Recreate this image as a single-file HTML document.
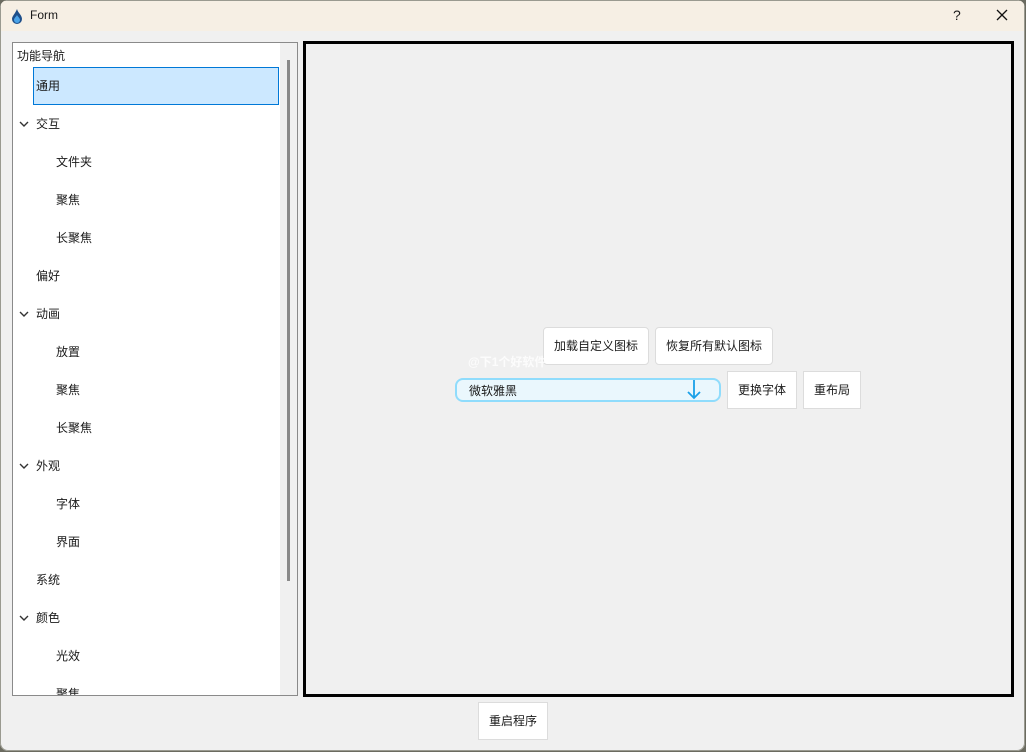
<!DOCTYPE html>
<html><head><meta charset="utf-8">
<style>
*{margin:0;padding:0;box-sizing:border-box}
html,body{width:1026px;height:752px;overflow:hidden;background:#6b6b60}
body{font-family:"Liberation Sans","Noto Sans CJK SC",sans-serif;font-size:12px;color:#1a1a1a}
.win{position:absolute;left:0;top:0;width:1025px;height:751px;background:#f0f0f0;border-radius:8px;overflow:hidden;box-shadow:inset 0 0 0 1px #9a9a90}
.title{position:absolute;left:1px;top:1px;width:1023px;height:30px;background:#f6efe4}
.title .t{position:absolute;left:29px;top:7px;font-size:12px}
.abs{position:absolute}
.tree{position:absolute;left:12px;top:42px;width:286px;height:654px;background:#fff;border:1px solid #8a8a8a;overflow:hidden}
.sb{position:absolute;left:267px;top:0;width:17px;height:652px;background:#f0f0f0}
.thumb{position:absolute;left:274px;top:17px;width:3px;height:521px;background:#8a8a8a}
.it{position:absolute;font-size:12px;line-height:16px}
.sel{position:absolute;left:20px;top:24px;width:246px;height:38px;background:#cce8ff;border:1px solid #0078d7}
.chev{position:absolute;left:6px;width:10px;height:8px}
.panel{position:absolute;left:303px;top:41px;width:711px;height:656px;border:3px solid #000;background:#f0f0f0}
.btn{position:absolute;background:#fff;border:1px solid #dcdcdc;text-align:center;font-size:12px}
</style></head><body>
<div class="win">
<div class="title">
<svg class="abs" style="left:9px;top:7px" width="14" height="16" viewBox="0 0 14 16"><path d="M7 1C8 5 12 7 12 11a5 5 0 0 1-10 0C2 8 5 6 7 1z" fill="#1e4f8a"/><path d="M7 7c1 2 3 3 3 5a3 3 0 0 1-6 0c0-2 2-3 3-5z" fill="#4aa3e8"/></svg>
<div class="t">Form</div>
<div class="abs" style="left:952px;top:6px;font-size:14px">?</div>
<svg class="abs" style="left:995px;top:8px" width="12" height="12" viewBox="0 0 12 12"><path d="M1 1L11 11M11 1L1 11" stroke="#111" stroke-width="1.3"/></svg>
</div>

<div class="tree">
<div class="sb"></div><div class="thumb"></div>
<div class="sel"></div>
<div class="it" style="left:4px;top:5px">功能导航</div>
<div class="it" style="left:23px;top:35px">通用</div>
<svg class="chev" style="top:77px" viewBox="0 0 10 8"><path d="M1 2l4 4 4-4" stroke="#333" stroke-width="1.4" fill="none"/></svg>
<div class="it" style="left:23px;top:73px">交互</div>
<div class="it" style="left:43px;top:111px">文件夹</div>
<div class="it" style="left:43px;top:149px">聚焦</div>
<div class="it" style="left:43px;top:187px">长聚焦</div>
<div class="it" style="left:23px;top:225px">偏好</div>
<svg class="chev" style="top:267px" viewBox="0 0 10 8"><path d="M1 2l4 4 4-4" stroke="#333" stroke-width="1.4" fill="none"/></svg>
<div class="it" style="left:23px;top:263px">动画</div>
<div class="it" style="left:43px;top:301px">放置</div>
<div class="it" style="left:43px;top:339px">聚焦</div>
<div class="it" style="left:43px;top:377px">长聚焦</div>
<svg class="chev" style="top:419px" viewBox="0 0 10 8"><path d="M1 2l4 4 4-4" stroke="#333" stroke-width="1.4" fill="none"/></svg>
<div class="it" style="left:23px;top:415px">外观</div>
<div class="it" style="left:43px;top:453px">字体</div>
<div class="it" style="left:43px;top:491px">界面</div>
<div class="it" style="left:23px;top:529px">系统</div>
<svg class="chev" style="top:571px" viewBox="0 0 10 8"><path d="M1 2l4 4 4-4" stroke="#333" stroke-width="1.4" fill="none"/></svg>
<div class="it" style="left:23px;top:567px">颜色</div>
<div class="it" style="left:43px;top:605px">光效</div>
<div class="it" style="left:43px;top:643px">聚焦</div>
</div>

<div class="panel"></div>

<div class="btn" style="left:543px;top:327px;width:106px;height:38px;line-height:36px;border-radius:4px">加载自定义图标</div>
<div class="btn" style="left:655px;top:327px;width:118px;height:38px;line-height:36px;border-radius:4px">恢复所有默认图标</div>
<div class="abs" style="left:455px;top:378px;width:266px;height:24px;background:#eaf7fd;border:2px solid #8fdcfc;border-radius:8px"></div>
<div class="abs" style="left:469px;top:382px;font-size:12px">微软雅黑</div>
<svg class="abs" style="left:687px;top:379px" width="14" height="22" viewBox="0 0 14 22"><path d="M7 1V19M1 13l6 6 6-6" stroke="#1aa0e8" stroke-width="1.8" fill="none"/></svg>
<div class="abs" style="left:468px;top:353px;font-size:12px;color:#fff;font-weight:bold;opacity:.8">@下1个好软件</div>
<div class="btn" style="left:727px;top:371px;width:70px;height:38px;line-height:36px">更换字体</div>
<div class="btn" style="left:803px;top:371px;width:58px;height:38px;line-height:36px">重布局</div>
<div class="btn" style="left:478px;top:702px;width:70px;height:38px;line-height:36px">重启程序</div>
</div>
</body></html>
